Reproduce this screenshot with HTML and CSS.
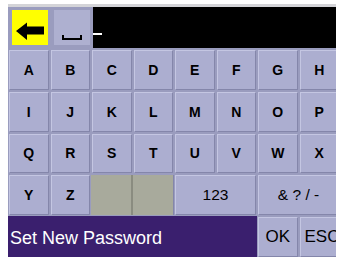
FILE: index.html
```html
<!DOCTYPE html>
<html>
<head>
<meta charset="utf-8">
<link rel="stylesheet" href="styles.css">
</head>
<body>
<div class="screen">
  <div class="strip"></div>
  <div class="top">
    <div class="back">
      <svg width="36" height="35" viewBox="0 0 36 35"><polygon points="4,21 15,12.5 15,16.5 32,16.5 32,24.5 15,24.5 15,30" fill="#000"/></svg>
    </div>
    <div class="space">
      <svg width="36" height="35" viewBox="0 0 36 35"><path d="M9 25 V29 H27 V25" fill="none" stroke="#000" stroke-width="2"/></svg>
    </div>
    <div class="display"><span class="cursor"></span></div>
  </div>
  <div class="keys">
    <div class="key">A</div><div class="key">B</div><div class="key">C</div><div class="key">D</div>
    <div class="key">E</div><div class="key">F</div><div class="key">G</div><div class="key">H</div>
    <div class="key">I</div><div class="key">J</div><div class="key">K</div><div class="key">L</div>
    <div class="key">M</div><div class="key">N</div><div class="key">O</div><div class="key">P</div>
    <div class="key">Q</div><div class="key">R</div><div class="key">S</div><div class="key">T</div>
    <div class="key">U</div><div class="key">V</div><div class="key">W</div><div class="key">X</div>
    <div class="key">Y</div><div class="key">Z</div><div class="blank"></div><div class="blank"></div>
    <div class="key wide reg">123</div><div class="key wide reg">&amp; ? / -</div>
    <div class="title">Set New Password</div>
    <div class="key big">OK</div><div class="key big esc">ESC</div>
  </div>
</div>
</body>
</html>
```
FILE: styles.css
```css
html, body { margin: 0; padding: 0; background: #fff; }
body { padding: 4px 0 0 8px; }
.screen {
  width: 328px;
  height: 253px;
  overflow: hidden;
  background: #9a9cbe;
  font-family: "Liberation Sans", Arial, sans-serif;
}
.strip { height: 3px; background: #d4d4d8; }
.top { display: flex; height: 41px; }
.back {
  margin: 3px 0 0 4px;
  width: 36px; height: 35px;
  background: #ffff00;
}
.space {
  margin: 3px 0 0 6px;
  width: 36px; height: 35px;
  background: #aeb0d0;
}
.back svg, .space svg { display: block; }
.display {
  margin-left: 3px;
  flex: 1;
  background: #000;
  position: relative;
}
.cursor {
  position: absolute;
  left: 0; top: 26px;
  width: 9px; height: 2px;
  background: #fff;
}
.keys {
  width: 332px;
  display: grid;
  grid-template-columns: repeat(8, 41.5px);
  grid-template-rows: repeat(5, 41.8px);
  margin-top: 1px;
}
.key {
  margin: 1px;
  background: #acaed0;
  border-top: 1px solid #c4c6e2;
  border-left: 1px solid #c4c6e2;
  border-bottom: 1px solid #8486aa;
  border-right: 1px solid #8486aa;
  display: flex;
  align-items: center;
  justify-content: center;
  font-weight: bold;
  font-size: 14px;
  color: #000;
}
.wide { grid-column: span 2; }
.reg { font-weight: normal; font-size: 15.5px; }
.big { font-weight: normal; font-size: 17px; }
.esc { justify-content: flex-start; padding-left: 4px; }
.blank {
  background: #a8aa9c;
  border-right: 2px solid #8a8c80;
  margin: 1px 0;
}
.blank + .blank { border-right: 1px solid #8486aa; }
.title {
  grid-column: span 6;
  background: #3a1f6e;
  color: #fff;
  font-size: 18px;
  display: flex;
  align-items: center;
  padding-left: 2px;
  margin-top: 0;
  margin-bottom: -2px;
}
```
